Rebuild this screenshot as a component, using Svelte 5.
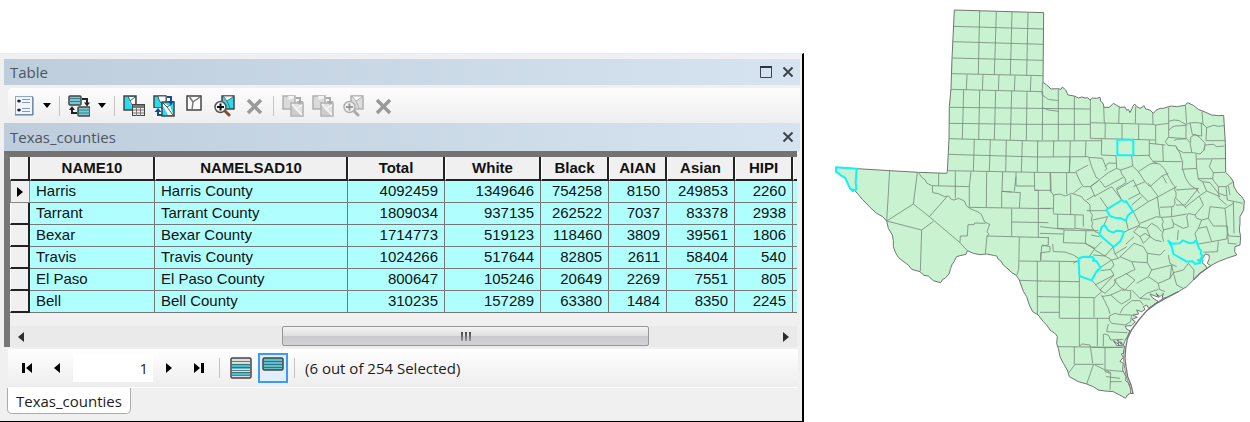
<script>
  const columns = ['NAME10', 'NAMELSAD10', 'Total', 'White', 'Black', 'AIAN', 'Asian', 'HIPI'];
  const rows = [
    ['Harris', 'Harris County', 4092459, 1349646, 754258, 8150, 249853, 2260],
    ['Tarrant', 'Tarrant County', 1809034, 937135, 262522, 7037, 83378, 2938],
    ['Bexar', 'Bexar County', 1714773, 519123, 118460, 3809, 39561, 1806],
    ['Travis', 'Travis County', 1024266, 517644, 82805, 2611, 58404, 540],
    ['El Paso', 'El Paso County', 800647, 105246, 20649, 2269, 7551, 805],
    ['Bell', 'Bell County', 310235, 157289, 63380, 1484, 8350, 2245]
  ];
  const widths = [20, 125, 193, 97, 96, 68, 58, 68, 58, 4];
  const total = widths.reduce((a, b) => a + b, 0);
  let record = $state('1');

  const outline = 'M373 30L641 38L639 247L650 255L663 267L683 266L693 268L697 261L707 270L714 285L733 288L745 294L755 291L765 294L773 293L780 300L787 294L800 295L810 292L812 303L820 312L822 322L838 322L850 310L860 316L870 322L885 321L890 331L895 328L900 338L906 325L909 318L914 312L920 320L930 325L936 322L942 317L947 327L960 330L970 340L978 331L990 325L1000 325L1016 320L1025 318L1040 320L1065 316L1073 308L1090 316L1105 328L1125 336L1145 345L1165 347L1181 346L1186 430L1187 517L1200 530L1210 545L1212 560L1222 578L1235 590L1243 603L1241 630L1230 650L1230 670L1228 690L1232 710L1230 735L1215 740L1214 755L1220 765L1190 775L1165 785L1142 797L1132 790L1138 775L1137 765L1126 762L1118 775L1116 788L1128 798L1130 806L1110 820L1090 840L1070 860L1045 875L1010 893L996 895L1000 880L990 890L978 880L986 892L960 882L968 894L984 904L966 918L956 925L950 915L940 920L945 928L935 935L920 930L926 942L908 945L922 952L906 958L916 965L905 977L886 978L890 988L900 992L893 1008L884 1024L880 1036L872 1025L874 1034L862 1018L867 1034L850 1022L860 1036L884 1038L880 1060L874 1062L880 1072L870 1084L880 1090L878 1110L888 1130L887 1142L897 1150L902 1168L902 1180L893 1184L886 1195L873 1187L850 1175L825 1173L805 1170L790 1160L770 1152L745 1145L718 1130L712 1110L700 1090L690 1070L685 1045L680 1030L682 1010L677 1002L660 990L650 975L640 965L625 945L608 935L598 915L590 890L580 874L575 860L568 840L558 825L545 818L540 812L520 795L512 782L505 778L500 768L490 766L470 762L450 764L430 760L412 752L408 763L390 767L380 770L372 785L366 794L362 805L357 822L345 835L338 838L332 848L310 842L295 828L282 826L270 815L252 810L245 808L235 795L222 786L205 772L196 757L190 740L190 722L187 705L175 685L170 663L158 650L140 640L120 622L105 606L97 598L75 572L60 565L45 533L20 517L18 502L80 506L180 512L265 517L350 520L352 515L357 415L358 320L363 265L366 175Z';

  // County boundaries, each region in its own local coordinates
  const regions = [
    { at: '0 0', d: 'M371 79L641 87M369 125L640 133M367 174L640 181M365 221L638 227M362 268L638 275M359 322L781 327M358 370L600 373L781 373M356 416L623 423L815 422M354 463L624 471L775 470M352 512L617 517L736 518M449 33L445 222M499 34L493 224M546 36L541 225M594 37L590 226M411 223L409 269M459 223L457 270M507 225L505 271M555 226L553 273M603 227L601 274M401 269L397 417M449 271L446 418M497 272L493 419M545 273L541 420M591 274L589 421M638 275L637 420M433 418L430 513M481 419L478 514M529 420L527 515M577 422L574 516M623 422L622 516M671 423L670 470M721 423L718 517M768 424L766 470M685 266L685 422M733 288L733 421M781 300L781 416M638 247L636 284L655 298L685 302M636 323L656 330L685 334' },
    { at: '0 0', d: 'M326 518L326 557M376 514L376 595M423 515L418 560L418 622M470 515L469 622M518 516L516 574L545 576M558 517L558 558M613 516L614 571L625 571L625 712M307 557L418 560M516 574L571 578L568 624M558 530L553 574M558 558L613 558M614 571L660 571M418 622L660 626M515 574L515 624M660 517L662 577M265 517L275 532L286 540L290 549L307 558L308 578L325 581L344 590L356 588L364 598L372 600L386 595L403 603L409 617L419 625L430 630L442 635L454 643L464 666L479 673L471 695L477 703L470 709M179 512L173 615L170 663M262 518L250 612L298 650L390 728L412 752M250 612L170 663L275 690L310 664M275 690L271 813M298 650L350 591M390 728L391 708L412 708L414 674L432 674L434 669L466 670M471 708L466 760M471 708L657 713M545 626L545 709M545 666L655 668M568 711L566 808L561 825M568 783L631 784M632 782L635 738L655 735L655 711M622 783L622 1038M570 841L631 843M622 889L631 890' },
    { at: '630 270', d: 'M191 48L193 100M238 46L236 100M287 50L286 100M338 70L339 103M152 98L340 103L347 105L386 100M196 100L195 145M246 102L246 150M296 103L296 148M152 145L345 150M347 105L347 162L328 160M386 52L386 140L376 155L384 166L408 168L412 178L430 188L460 188L480 192L492 180L495 168M436 45L440 100M486 65L489 102M386 94L402 90L418 92L425 97L438 103L455 98L475 98L489 102L500 113L520 106L535 109L552 107M387 120L396 112L405 108L438 106M385 142L438 146L438 103M450 98L457 134M402 152L410 148L440 146L450 158L455 186M452 158L452 142L465 133L480 143L495 160L492 182M457 134L485 138L484 98M500 113L498 152L556 152M495 165L520 163L530 170L553 168M347 162L376 165M328 150L328 196M185 148L184 195L228 197M281 197L328 196M326 195L335 210L345 220L358 222L365 228L376 240L380 250L388 265L398 282L405 290L404 300L408 308L408 320L404 328L405 340L400 350M368 165L370 214M338 214L425 215M408 170L420 190L423 202L428 215L427 235L437 265L450 285L470 298L478 310M425 238L470 235M468 192L470 235L475 268L488 275L510 278L535 310L560 318M470 207L555 206M516 208L508 230L520 248L555 247M520 248L518 268L535 290M475 266L518 266M535 290L558 290L580 275M535 290L537 325L560 345M558 290L562 330M565 288L570 315M580 290L610 300M90 202L88 248M146 202L155 230L168 262L176 266M107 245L145 225M107 245L122 278L130 290L150 290L172 275L178 270M146 202L187 205L200 236L195 242M195 230L205 219L228 220M228 197L230 235L205 248L152 290L165 320M230 235L242 240L245 252L255 265L258 278M275 197L278 228L242 240M180 272L195 292M165 318L215 290L245 330M195 292L250 262M100 310L125 290M140 330L165 315M180 322L203 355M258 278L228 297M230 300L280 270L300 310L325 335M230 300L245 330M300 310L265 328M275 345L305 320M278 228L295 245L315 275L280 290M295 245L330 222L350 218M315 275L330 290L367 257M325 280L355 320L410 290M380 280L367 257L385 250M325 335L355 320M325 335L280 365M352 320L360 380M408 300L475 295L435 345L408 345M408 325L440 355M435 352L478 318L500 303M478 318L490 345L465 375M488 275L500 303L540 320M510 350L555 355L580 340M510 350L505 385L520 408L561 408M555 355L560 405L562 430M505 385L485 390L470 385L465 375L445 370L440 380L445 410L430 415L400 400L395 385M395 352L395 380L365 382M400 350L360 352M395 380L440 372M365 382L370 395L366 405L371 420L366 435L371 455M370 420L400 412L400 400M485 390L475 415L500 410M475 415L465 430L470 450M500 410L515 455L475 462M515 455L560 447L562 430M535 455L532 485L490 487M562 430L568 438L600 440M580 335L582 430M562 330L608 340M415 420L412 450M562 408L565 460L590 462M140 335L150 345L150 365L157 375L154 390L158 400L155 410L165 425L178 430M140 362L200 362M158 390L203 380L192 405M258 390L265 420L250 428M280 365L300 405L265 420M282 425L295 410L320 415L335 400L352 410L365 425M300 400L350 380L365 382M280 425L300 440L315 430L330 440L310 460L300 440M330 440L345 450L365 455M320 415L330 440M258 462L282 440M0 355L40 355M41 315L40 370M40 372L130 375L130 410M53 373L53 415M92 315L92 374M0 410L72 418M105 375L105 415L160 420M32 250L33 305M80 248L80 312M53 415L105 417M72 420L138 422L136 460L70 458ZM138 422L175 422M0 430L70 432M33 305L40 315L60 312L75 318L95 310L125 320L132 330L140 335M136 460L165 478M153 435L178 440' },
    { at: '630 690', d: 'M0 93L116 95M58 95L58 265M0 153L118 155M118 138L118 348M0 200L162 203M0 247L58 247M60 265L208 265M50 350L250 352M162 203L162 262M172 265L172 348M155 150L185 185L162 205M5 45L30 50L30 65L2 68L2 90M38 42L40 65L75 66L100 75L116 85M100 100L112 92M135 40L165 55L145 85M165 55L185 35M165 60L195 78L220 50M160 75L195 78L215 90L182 112M215 90L222 105L212 118L182 122M225 72L235 85L215 90M212 118L222 135L165 165M222 135L180 180L195 190L222 165L228 150M218 48L225 72L260 50M222 150L285 118L275 95L240 80L235 85M222 150L240 172L255 180L285 150L258 130M275 95L322 98L335 120L325 140L290 160M240 80L260 62L282 40M282 40L310 50L322 70L322 98M325 140L355 160L390 145L395 105L335 120M322 70L360 75L375 60M390 145L400 128L395 105M355 160L358 178L375 185M400 128L430 120L445 100M445 100L462 120L460 150M385 75L390 100L410 110M400 128L410 165L430 175M185 200L212 195L245 180L255 180L272 182L272 205L245 222L235 215L212 195M185 195L205 235L210 252M275 180L300 205L320 190L355 178M240 250L250 232L275 212L300 212L310 225M300 205L330 208M208 258L225 250L240 254L275 255L272 275L255 285L215 280L208 270ZM205 282L200 305L262 308M192 312L205 315L212 330L250 328M190 312L190 348M103 350L103 403M118 348L128 342L150 345L155 375L158 400M155 352L195 353L195 425M85 430L105 403L190 403M160 405L140 462M165 405L212 428L210 480M198 420L255 425M195 425L212 430M210 455L245 455M195 353L246 352M198 440L240 445' }
  ];

  const selected = [
    'M18 502L80 506L77 545L79 568L68 573L60 565L45 533L35 528L18 515Z',
    'M862 419H910V466H862Z',
    'M829 629L876 600L883 606L888 603L909 634L894 646L887 662L870 654L860 655L840 648Z',
    'M808 704L816 680L824 675L835 692L850 698L860 692L872 693L882 696L872 722L851 741Z',
    'M746 776L757 771L775 770L788 771L792 778L789 782L799 783L807 796L813 802L799 815L785 841L748 828Z',
    'M1015 722L1026 731L1049 730L1058 721L1080 730L1088 729L1099 721L1107 746L1113 751L1112 762L1119 768L1112 775L1118 780L1104 780L1112 788L1096 792L1088 784L1070 785L1030 762L1026 742Z'
  ];
</script>

{#snippet icon(kind)}
  <svg class="icon" viewBox="0 0 22 22" aria-hidden="true">
    {#if kind === 'list'}
      <rect x="2.5" y="1.5" width="17" height="18" fill="#f1f6fc" stroke="#8ea6c7" />
      <path d="M2 20H20V2" fill="none" stroke="#5a7299" />
      <path d="M9 4.500H17M9 7.500H17M9 13.500H17M9 16.500H17" stroke="#8798b4" />
      <path d="M4 6H8M4 15H8" stroke="#333" />
      <circle cx="6" cy="6" r="1.500" fill="#222" /><circle cx="6" cy="15" r="1.500" fill="#222" />
    {:else if kind === 'relate'}
      <rect x="1" y="1" width="12" height="9" rx="1" fill="#76c8d5" stroke="#444" stroke-width="1.500" />
      <path d="M1 3.500H13M1 6.500H13" stroke="#3f7d87" />
      <rect x="10" y="12" width="12" height="9" rx="1" fill="#76c8d5" stroke="#444" stroke-width="1.500" />
      <path d="M10 15H22M10 18H22" stroke="#3f7d87" />
      <path d="M14 4H19V9M9 18H4V14" fill="none" stroke="#222" stroke-width="2" />
      <path d="M16 7.500H22L19 11.500ZM1 15H7L4 11Z" fill="#222" />
    {:else if kind === 'attributes'}
      <path d="M1 1H13V15H1Z" fill="#20dff3" stroke="#444" stroke-width="1.500" />
      <path d="M6 2H12V14H10L6 6Z" fill="#fff" />
      <path d="M5 1L7 6L11 14M7 6L12 2" fill="none" stroke="#555" />
      <rect x="9.500" y="9.500" width="12" height="11" fill="#eee" stroke="#444" />
      <path d="M10 11.500H21" stroke="#777" stroke-width="3" />
      <path d="M10 15H21M10 18H21M13.500 12V21M17.500 12V21" stroke="#777" />
    {:else if kind === 'switch'}
      <path d="M1 1H13V13H1Z" fill="#20dff3" stroke="#444" stroke-width="1.500" />
      <path d="M5 1L6 5L11 12H13V1Z" fill="#fff" stroke="#555" />
      <path d="M9 7H21V21H9Z" fill="#20dff3" stroke="#444" stroke-width="1.500" />
      <path d="M10 8L17 11L20 19V20H15L10 11Z" fill="#fff" />
      <path d="M10 8L14 12L20 20M14 12L19 9" fill="none" stroke="#555" />
      <path d="M14 2H18V7" fill="none" stroke="#0b4f9b" stroke-width="2" />
      <path d="M14.500 6H21.500L18 10Z" fill="#0b4f9b" />
      <path d="M0 13H8V22H0Z" fill="#f6f6f6" />
      <path d="M5 16V20H9" fill="none" stroke="#0b4f9b" stroke-width="2" />
      <path d="M1.500 17H8.500L5 13Z" fill="#0b4f9b" />
    {:else if kind === 'copy'}
      <path d="M1 1H13V14H1Z" fill="#dadada" stroke="#b0b0b0" stroke-width="1.500" />
      <path d="M6 1L7 5L12 3V1Z" fill="#f3f3f3" />
      <path d="M9 8H21V21H9Z" fill="#e2e2e2" stroke="#b0b0b0" stroke-width="1.500" />
      <path d="M10 9L13 14L19 20H10Z" fill="#cdcdcd" />
      <path d="M10 9L14 14L20 20M14 14L20 10" fill="none" stroke="#f7f7f7" stroke-width="1.500" />
      <path d="M14 3H18V7" fill="none" stroke="#aaa" stroke-width="2" />
      <path d="M14.500 6H21.500L18 10Z" fill="#aaa" />
    {:else if kind === 'clear'}
      <path d="M4 1H18V15H4Z" fill="#fdfdfd" stroke="#444" stroke-width="1.500" />
      <path d="M6 1L10 7L9 15M10 7L17 2" fill="none" stroke="#777" stroke-width="1.500" />
    {:else if kind === 'zoom' || kind === 'zoom-off'}
      {@const off = kind === 'zoom-off'}
      <path d="M9 1H21V14H9Z" fill={off ? '#ddd' : '#20dff3'} stroke={off ? '#b0b0b0' : '#444'} stroke-width="1.500" />
      <path d="M10 1L14 6L20 2V1Z" fill="#fff" stroke={off ? '#b0b0b0' : '#666'} />
      <path d="M14 6L17 13" stroke={off ? '#b0b0b0' : '#666'} />
      <path d="M12 16L16 20" stroke={off ? '#aaa' : '#8b4a30'} stroke-width="3" stroke-linecap="round" />
      <circle cx="7.500" cy="12" r="5.500" fill="#f4f4f4" stroke={off ? '#b0b0b0' : '#555'} stroke-width="1.500" />
      <path d="M4 12H11M7.500 8.500V15.500" stroke={off ? '#999' : '#111'} stroke-width="2" />
    {:else if kind === 'delete'}
      <path d="M5 5L18 18M18 5L5 18" stroke="#9a9a9a" stroke-width="3.500" />
    {:else if kind === 'all'}
      <rect x="1" y="1" width="20" height="20" rx="1.500" fill="#ddd" stroke="#444" stroke-width="1.500" />
      <path d="M2 7H20V12H2ZM2 15H20V18H2Z" fill="#55bccb" />
      <path d="M2 4.500H20M2 13.500H20M2 18.500H20" stroke="#777" />
      <path d="M2 7.500H20M2 10.500H20M2 15.500H20" stroke="#32747d" />
    {:else if kind === 'chosen'}
      <rect x="1" y="1" width="20" height="12" rx="1.500" fill="#62c0ce" stroke="#444" stroke-width="1.500" />
      <path d="M2 4.500H20M2 7.500H20M2 10.500H20" stroke="#32747d" />
    {/if}
  </svg>
{/snippet}

{#snippet cross()}
  <svg class="cross" viewBox="0 0 12 12" aria-hidden="true"><path d="M1.500 1.500L10.500 10.500M10.500 1.500L1.500 10.500" stroke="#3b454c" stroke-width="2" /></svg>
{/snippet}

{#snippet tool(kind, label, disabled)}
  <button class="tool" aria-label={label} {disabled}>{@render icon(kind)}</button>
{/snippet}

<main>
  <section class="window" aria-label="Attribute table">
    <header class="bar title">
      <span>Table</span>
      <button aria-label="Maximize"><svg class="max" viewBox="0 0 14 14" aria-hidden="true"><path d="M1.500 2V12.500H12.500V2" fill="none" stroke="#3b454c" /><path d="M1 2H13" stroke="#2d373d" stroke-width="2" /></svg></button>
      <button aria-label="Close window">{@render cross()}</button>
    </header>
    <div class="toolbar">
      <button class="drop" aria-label="Table options">{@render icon('list')}<i class="caret"></i></button>
      <i class="sep"></i>
      <button class="drop" aria-label="Related tables">{@render icon('relate')}<i class="caret"></i></button>
      <i class="sep"></i>
      {@render tool('attributes', 'Select by attributes', false)}
      {@render tool('switch', 'Switch selection', false)}
      {@render tool('clear', 'Clear selection', false)}
      {@render tool('zoom', 'Zoom to selected', false)}
      {@render tool('delete', 'Delete selected', true)}
      <i class="sep"></i>
      {@render tool('copy', 'Select highlighted', true)}
      {@render tool('copy', 'Unselect highlighted', true)}
      {@render tool('zoom-off', 'Zoom to highlighted', true)}
      {@render tool('delete', 'Delete highlighted', true)}
    </div>
    <div class="bar sheet">
      <span>Texas_counties</span>
      <button aria-label="Close table">{@render cross()}</button>
    </div>
    <div class="grid">
      <table>
        <colgroup>
          {#each widths as w}<col style="width: {(w / total) * 100}%" />{/each}
        </colgroup>
        <thead>
          <tr><th aria-label="Record"></th>{#each columns as c}<th scope="col">{c}</th>{/each}<th aria-label="More"></th></tr>
        </thead>
        <tbody>
          {#each rows as row, r}
            <tr>
              <th class:current={r === 0} scope="row" aria-label="Record {r + 1}">{#if r === 0}<i class="arrow right"></i>{/if}</th>
              {#each row as cell, c}<td class:num={c > 1}>{cell}</td>{/each}
              <td></td>
            </tr>
          {/each}
        </tbody>
      </table>
      <div class="scroll">
        <button aria-label="Scroll left"><i class="arrow left"></i></button>
        <div class="track"><div class="thumb"><i></i><i></i><i></i></div></div>
        <button aria-label="Scroll right"><i class="arrow right"></i></button>
      </div>
    </div>
    <div class="nav">
      <button aria-label="First record"><i class="stop"></i><i class="arrow left"></i></button>
      <button aria-label="Previous record"><i class="arrow left"></i></button>
      <input aria-label="Record number" bind:value={record} />
      <button aria-label="Next record"><i class="arrow right"></i></button>
      <button aria-label="Last record"><i class="arrow right"></i><i class="stop"></i></button>
      <i class="sep"></i>
      <button class="view" aria-label="Show all records">{@render icon('all')}</button>
      <button class="view on" aria-label="Show selected records">{@render icon('chosen')}</button>
      <i class="sep"></i>
      <span>(6 out of 254 Selected)</span>
    </div>
    <div class="tabs"><button>Texas_counties</button></div>
  </section>

  <section class="map">
    <svg viewBox="0 0 1260 1230" role="img" aria-label="Texas counties">
      <defs><clipPath id="state"><path d={outline} /></clipPath></defs>
      <path d={outline} fill="#c8f2d0" stroke="#6f7671" stroke-width="3" stroke-linejoin="round" />
      <g clip-path="url(#state)">
        <g fill="none" stroke="#788a7d" stroke-width="2.500" stroke-linejoin="round">
          {#each regions as { at, d }}<path transform="translate({at})" {d} />{/each}
        </g>
      </g>
      <g fill="none" stroke="#777" stroke-width="4">
        <path d="M1142 797L1110 820L1090 840M1045 875L1010 893L980 910L950 932L925 962L904 990L892 1016L887 1045L885 1075L888 1100L893 1130L903 1155L909 1180L902 1180" />
        <path d="M1000 895L960 922L936 948L912 978L896 1007M882 1050L881 1080L884 1105L889 1130L899 1160" stroke-width="2.500" />
      </g>
      <g fill="none" stroke="#12f3f5" stroke-width="6" stroke-linejoin="round">
        {#each selected as d}<path {d} />{/each}
      </g>
    </svg>
  </section>
</main>

<style>
  :global(body) { margin: 0; background: #fff; }
  main { display: grid; grid-template-columns: minmax(0, 804fr) minmax(0, 446fr); align-items: start; }
  * { box-sizing: border-box; }
  button { border: 0; padding: 0; background: none; color: inherit; font: inherit; display: flex; align-items: center; justify-content: center; }
  .window { margin-top: 53px; padding: 5px 2px 5px 4px; background: #f0f0f0; border-right: 2px solid #000; border-bottom: 2px solid #000; border-top: 1px solid #ececec; font: 15px/20px "Open Sans", sans-serif; color: #1d1d1d; }
  .bar { display: flex; align-items: center; gap: 10px; padding: 0 6px; color: #4c5660; background: linear-gradient(90deg, #becddc, #d6e4f1); }
  .bar span { flex: 1; }
  .bar button { width: 12px; height: 20px; }
  .title { height: 26px; }
  .sheet { height: 28px; }
  .cross { width: 12px; height: 12px; flex: none; }
  .max { width: 14px; height: 14px; flex: none; }
  .toolbar { display: flex; align-items: center; gap: 8px; height: 35px; margin: 3px 0 0 4px; padding: 0 5px; border-radius: 4px 0 0 4px; background: linear-gradient(#fdfdfd, #eee); }
  .icon { width: 22px; height: 22px; flex: none; }
  .drop { width: 38px; justify-content: space-between; }
  .tool { width: 22px; height: 24px; }
  .caret { border: 4px solid transparent; border-top: 5px solid #000; border-bottom: 0; }
  .sep { width: 1px; height: 20px; background: #c4c4c4; }
  .grid { border: solid #777; border-width: 6px 0 0 6px; border-top-color: #737373; margin-right: 3px; background: #f0f0f0; }
  table { width: 100%; border-collapse: separate; border-spacing: 0; table-layout: fixed; font: 15px/18px "Liberation Sans", Arial, sans-serif; color: #111; }
  th, td { height: 22px; padding: 0 6px; overflow: hidden; white-space: nowrap; border-right: 1px solid #777; border-bottom: 1px solid #777; }
  td { padding-bottom: 2px; background: #afffff; text-align: left; }
  td.num { text-align: right; }
  th { padding: 0; background: #f0f0f0; border-right: 2px solid #222; border-bottom: 2px solid #222; border-left: 1px solid #fff; }
  thead th { height: 24px; }
  th.current { border-color: #888; border-width: 1px; border-top: 0; }
  th .arrow { margin: 0 auto; }
  .arrow { display: block; width: 0; height: 0; border: 5px solid transparent; flex: none; }
  .arrow.right { border-left: 6px solid #000; border-right: 0; }
  .arrow.left { border-right: 6px solid #000; border-left: 0; }
  td:last-child, thead th:last-child { border-right: 0; padding: 0; }
  .scroll { display: flex; height: 21px; margin-top: 13px; background: #eaeaea; }
  .scroll button { width: 22px; opacity: 0.8; }
  .track { flex: 1; }
  .thumb { display: flex; align-items: center; justify-content: center; gap: 2px; width: 49.500%; height: 20px; margin-left: 33.600%; border: 1px solid #979797; border-radius: 2px; background: linear-gradient(#f3f3f3, #e0e0e2 48%, #c9cacd 52%, #d4d4d7); }
  .thumb i { width: 2px; height: 9px; background: linear-gradient(#444, #999); }
  .nav { display: flex; align-items: center; height: 39px; margin: 2px 2px 0 4px; padding-left: 5px; gap: 2px; background: linear-gradient(#fff, #ededed); border-bottom: 1px solid #fff; }
  .nav button { width: 28px; height: 30px; gap: 1px; }
  .stop { width: 3px; height: 10px; background: #000; }
  input { width: 80px; height: 28px; padding: 0 5px; border: 0; background: #fff; text-align: right; font: inherit; color: inherit; }
  .nav .sep { margin: 0 4px; }
  .nav .view { width: 30px; border: 2px solid transparent; }
  .nav .view.on { border-color: #3c9bf5; background: #e2eefb; }
  .nav span { margin-left: 4px; }
  .tabs { height: 28px; padding-left: 3px; }
  .tabs button { height: 26px; padding: 0 8px; background: #fff; border: 1px solid #aaa; border-top: 0; border-radius: 0 0 5px 5px; }
  .map { padding-left: 26px; }
  .map svg { display: block; width: 100%; height: auto; }
</style>
